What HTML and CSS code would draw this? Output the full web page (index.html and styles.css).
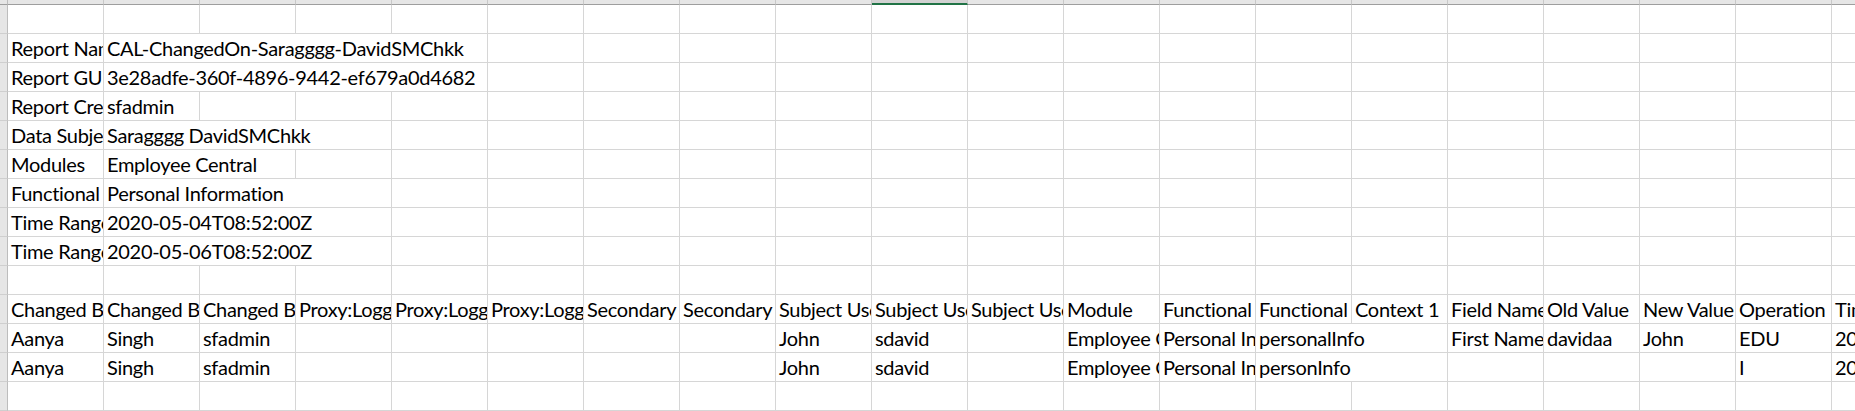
FILE: index.html
```html
<!DOCTYPE html>
<html>
<head>
<meta charset="utf-8">
<link rel="stylesheet" href="styles.css">
<title>Sheet</title>
</head>
<body>
<div class="sheet">
  <div class="colheads">
    <div class="corner"></div>
    <div class="ch"></div><div class="ch"></div><div class="ch"></div><div class="ch"></div><div class="ch"></div>
    <div class="ch"></div><div class="ch"></div><div class="ch"></div><div class="ch"></div><div class="ch sel"></div>
    <div class="ch"></div><div class="ch"></div><div class="ch"></div><div class="ch"></div><div class="ch"></div>
    <div class="ch"></div><div class="ch"></div><div class="ch"></div><div class="ch"></div><div class="ch"></div>
  </div>

  <div class="row">
    <div class="rh"></div>
    <div class="c"></div><div class="c"></div><div class="c"></div><div class="c"></div><div class="c"></div>
    <div class="c"></div><div class="c"></div><div class="c"></div><div class="c"></div><div class="c"></div>
    <div class="c"></div><div class="c"></div><div class="c"></div><div class="c"></div><div class="c"></div>
    <div class="c"></div><div class="c"></div><div class="c"></div><div class="c"></div><div class="c"></div>
  </div>

  <div class="row">
    <div class="rh"></div>
    <div class="c">Report Name</div><div class="c s4">CAL-ChangedOn-Saragggg-DavidSMChkk</div>
    <div class="c"></div><div class="c"></div><div class="c"></div><div class="c"></div><div class="c"></div>
    <div class="c"></div><div class="c"></div><div class="c"></div><div class="c"></div><div class="c"></div>
    <div class="c"></div><div class="c"></div><div class="c"></div><div class="c"></div><div class="c"></div>
  </div>

  <div class="row">
    <div class="rh"></div>
    <div class="c">Report GUID</div><div class="c s4">3e28adfe-360f-4896-9442-ef679a0d4682</div>
    <div class="c"></div><div class="c"></div><div class="c"></div><div class="c"></div><div class="c"></div>
    <div class="c"></div><div class="c"></div><div class="c"></div><div class="c"></div><div class="c"></div>
    <div class="c"></div><div class="c"></div><div class="c"></div><div class="c"></div><div class="c"></div>
  </div>

  <div class="row">
    <div class="rh"></div>
    <div class="c">Report Creator</div><div class="c">sfadmin</div>
    <div class="c"></div><div class="c"></div><div class="c"></div><div class="c"></div><div class="c"></div>
    <div class="c"></div><div class="c"></div><div class="c"></div><div class="c"></div><div class="c"></div>
    <div class="c"></div><div class="c"></div><div class="c"></div><div class="c"></div><div class="c"></div>
    <div class="c"></div><div class="c"></div><div class="c"></div>
  </div>

  <div class="row">
    <div class="rh"></div>
    <div class="c">Data Subject</div><div class="c s3">Saragggg DavidSMChkk</div>
    <div class="c"></div><div class="c"></div><div class="c"></div><div class="c"></div><div class="c"></div>
    <div class="c"></div><div class="c"></div><div class="c"></div><div class="c"></div><div class="c"></div>
    <div class="c"></div><div class="c"></div><div class="c"></div><div class="c"></div><div class="c"></div>
    <div class="c"></div>
  </div>

  <div class="row">
    <div class="rh"></div>
    <div class="c">Modules</div><div class="c s2">Employee Central</div>
    <div class="c"></div><div class="c"></div><div class="c"></div><div class="c"></div><div class="c"></div>
    <div class="c"></div><div class="c"></div><div class="c"></div><div class="c"></div><div class="c"></div>
    <div class="c"></div><div class="c"></div><div class="c"></div><div class="c"></div><div class="c"></div>
    <div class="c"></div><div class="c"></div>
  </div>

  <div class="row">
    <div class="rh"></div>
    <div class="c">Functional Area</div><div class="c s3">Personal Information</div>
    <div class="c"></div><div class="c"></div><div class="c"></div><div class="c"></div><div class="c"></div>
    <div class="c"></div><div class="c"></div><div class="c"></div><div class="c"></div><div class="c"></div>
    <div class="c"></div><div class="c"></div><div class="c"></div><div class="c"></div><div class="c"></div>
    <div class="c"></div>
  </div>

  <div class="row">
    <div class="rh"></div>
    <div class="c">Time Range Start</div><div class="c s3">2020-05-04T08:52:00Z</div>
    <div class="c"></div><div class="c"></div><div class="c"></div><div class="c"></div><div class="c"></div>
    <div class="c"></div><div class="c"></div><div class="c"></div><div class="c"></div><div class="c"></div>
    <div class="c"></div><div class="c"></div><div class="c"></div><div class="c"></div><div class="c"></div>
    <div class="c"></div>
  </div>

  <div class="row">
    <div class="rh"></div>
    <div class="c">Time Range End</div><div class="c s3">2020-05-06T08:52:00Z</div>
    <div class="c"></div><div class="c"></div><div class="c"></div><div class="c"></div><div class="c"></div>
    <div class="c"></div><div class="c"></div><div class="c"></div><div class="c"></div><div class="c"></div>
    <div class="c"></div><div class="c"></div><div class="c"></div><div class="c"></div><div class="c"></div>
    <div class="c"></div>
  </div>

  <div class="row">
    <div class="rh"></div>
    <div class="c"></div><div class="c"></div><div class="c"></div><div class="c"></div><div class="c"></div>
    <div class="c"></div><div class="c"></div><div class="c"></div><div class="c"></div><div class="c"></div>
    <div class="c"></div><div class="c"></div><div class="c"></div><div class="c"></div><div class="c"></div>
    <div class="c"></div><div class="c"></div><div class="c"></div><div class="c"></div><div class="c"></div>
  </div>

  <div class="row">
    <div class="rh"></div>
    <div class="c">Changed By First Name</div>
    <div class="c">Changed By Last Name</div>
    <div class="c">Changed By User ID</div>
    <div class="c">Proxy:Logged In First Name</div>
    <div class="c">Proxy:Logged In Last Name</div>
    <div class="c">Proxy:Logged In User ID</div>
    <div class="c">Secondary User Name</div>
    <div class="c">Secondary User ID</div>
    <div class="c">Subject User First Name</div>
    <div class="c">Subject User Last Name</div>
    <div class="c">Subject User ID</div>
    <div class="c">Module</div>
    <div class="c">Functional Area</div>
    <div class="c">Functional Context</div>
    <div class="c">Context 1</div>
    <div class="c">Field Name</div>
    <div class="c">Old Value</div>
    <div class="c">New Value</div>
    <div class="c">Operation</div>
    <div class="c">Time</div>
  </div>

  <div class="row">
    <div class="rh"></div>
    <div class="c">Aanya</div><div class="c">Singh</div><div class="c">sfadmin</div>
    <div class="c"></div><div class="c"></div><div class="c"></div><div class="c"></div><div class="c"></div>
    <div class="c">John</div><div class="c">sdavid</div><div class="c"></div>
    <div class="c">Employee Central</div><div class="c">Personal Information</div>
    <div class="c s2">personalInfo</div>
    <div class="c">First Name</div><div class="c">davidaa</div><div class="c">John</div>
    <div class="c">EDU</div><div class="c">2020-05-05T08:52:00Z</div>
  </div>

  <div class="row">
    <div class="rh"></div>
    <div class="c">Aanya</div><div class="c">Singh</div><div class="c">sfadmin</div>
    <div class="c"></div><div class="c"></div><div class="c"></div><div class="c"></div><div class="c"></div>
    <div class="c">John</div><div class="c">sdavid</div><div class="c"></div>
    <div class="c">Employee Central</div><div class="c">Personal Information</div>
    <div class="c s2">personInfo</div>
    <div class="c"></div><div class="c"></div><div class="c"></div>
    <div class="c">I</div><div class="c">2020-05-05T08:52:00Z</div>
  </div>

  <div class="row">
    <div class="rh"></div>
    <div class="c"></div><div class="c"></div><div class="c"></div><div class="c"></div><div class="c"></div>
    <div class="c"></div><div class="c"></div><div class="c"></div><div class="c"></div><div class="c"></div>
    <div class="c"></div><div class="c"></div><div class="c"></div><div class="c"></div><div class="c"></div>
    <div class="c"></div><div class="c"></div><div class="c"></div><div class="c"></div><div class="c"></div>
  </div>
</div>
</body>
</html>
```

FILE: styles.css
```css
html, body {
  margin: 0;
  padding: 0;
  background: #ffffff;
}

.sheet {
  width: 1855px;
  height: 411px;
  overflow: hidden;
  background: #ffffff;
  font-family: "Lato", "Liberation Sans", sans-serif;
  font-size: 20px;
  letter-spacing: -0.3px;
  color: #000000;
}

.colheads {
  display: flex;
  height: 5px;
}

.corner {
  flex: 0 0 8px;
  box-sizing: border-box;
  background: #e6e6e6;
  border-right: 1px solid #bdbdbd;
  border-bottom: 1px solid #9e9e9e;
}

.ch {
  flex: 0 0 96px;
  box-sizing: border-box;
  background: #e6e6e6;
  border-right: 1px solid #c8c8c8;
  border-bottom: 1px solid #9e9e9e;
}

.ch.sel {
  background: #d2d2d2;
  border-bottom: 2px solid #217346;
}

.row {
  display: flex;
  height: 29px;
}

.rh {
  flex: 0 0 8px;
  box-sizing: border-box;
  background: #e6e6e6;
  border-right: 1px solid #bdbdbd;
  border-bottom: 1px solid #cfcfcf;
}

.c {
  flex: 0 0 96px;
  box-sizing: border-box;
  border-right: 1px solid #d6d6d6;
  border-bottom: 1px solid #d6d6d6;
  padding: 0 0 2px 3px;
  overflow: hidden;
  white-space: nowrap;
  display: flex;
  align-items: flex-end;
  line-height: 24px;
}

.s2 { flex-basis: 192px; }
.s3 { flex-basis: 288px; }
.s4 { flex-basis: 384px; }
```
